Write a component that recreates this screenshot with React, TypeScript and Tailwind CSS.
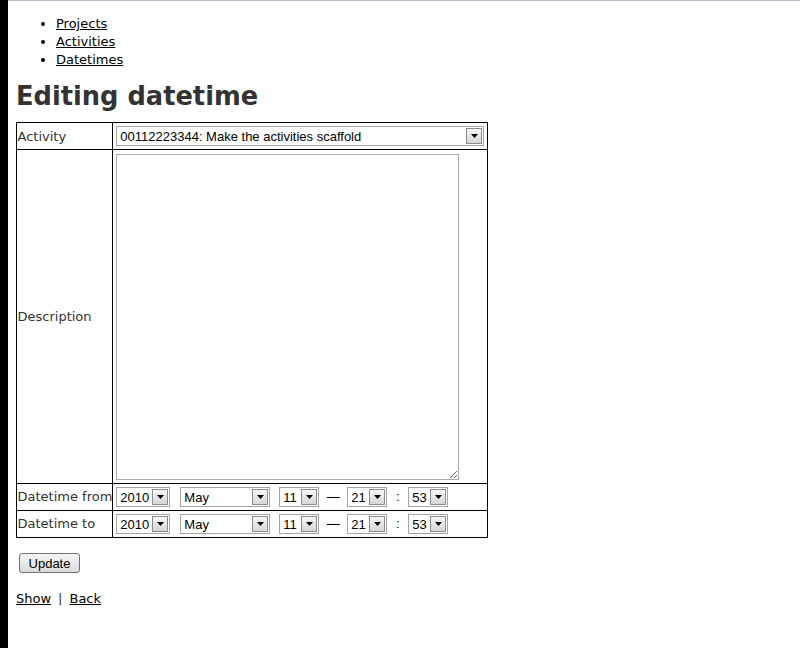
import React from "react";

function Arrow() {
  return (
    <div className="flex h-4 w-4 shrink-0 items-center justify-center border border-[#8c8c8c] bg-gradient-to-b from-[#f7f7f7] to-[#d6d6d6]">
      <svg width="7" height="4" viewBox="0 0 7 4">
        <path d="M0 0h7L3.5 4z" fill="#000" />
      </svg>
    </div>
  );
}

function Sel({ value, className }: { value: string; className: string }) {
  return (
    <div
      className={`flex h-5 shrink-0 items-center justify-between border border-[#a5a5a5] bg-white pl-[3px] pr-px font-['Liberation_Sans',Arial,sans-serif] text-[13px] leading-none text-black ${className}`}
    >
      <span className="whitespace-nowrap">{value}</span>
      <Arrow />
    </div>
  );
}

function DateTimeRow() {
  return (
    <div className="flex items-center font-['Liberation_Sans',Arial,sans-serif] text-[13px] text-black">
      <Sel value="2010" className="mr-[10px] w-[54px]" />
      <Sel value="May" className="mr-[9px] w-[90px]" />
      <Sel value="11" className="w-[40px]" />
      <span className="w-[28px] text-center">—</span>
      <Sel value="21" className="w-[40px]" />
      <span className="w-[21px] text-center">:</span>
      <Sel value="53" className="w-[40px]" />
    </div>
  );
}

export default function App() {
  const label = "border border-black pl-[0.5px] align-middle whitespace-nowrap";
  const cell = "border border-black pl-[3px] align-middle";

  return (
    <div className="flex min-h-[648px] bg-white font-['DejaVu_Sans',Verdana,sans-serif] text-[13px] text-[#333]">
      <div className="w-2 shrink-0 bg-black" />
      <div className="flex-1 border-t border-[#b8bccc] pl-2">
        <ul className="mt-[14px] list-disc pl-10 leading-[18px] text-black">
          <li>
            <a href="#" className="underline">Projects</a>
          </li>
          <li>
            <a href="#" className="underline">Activities</a>
          </li>
          <li>
            <a href="#" className="underline">Datetimes</a>
          </li>
        </ul>

        <h1 className="mt-[12px] mb-[11px] text-[25.7px] leading-[30px] font-bold text-[#333]">
          Editing datetime
        </h1>

        <table className="table-fixed border-collapse border border-black">
          <tbody>
            <tr>
              <td className={`${label} h-[27px] w-[94px] pt-px`}>Activity</td>
              <td className={`${cell} h-[27px] w-[375px]`}>
                <Sel value="00112223344: Make the activities scaffold" className="w-[368px]" />
              </td>
            </tr>
            <tr>
              <td className={`${label} h-[334px]`}>Description</td>
              <td className={`${cell} h-[334px]`}>
                <textarea
                  readOnly
                  className="block h-[326px] w-[343px] border border-[#a9a9a9] bg-white"
                />
              </td>
            </tr>
            <tr>
              <td className={`${label} h-[27px]`}>Datetime from</td>
              <td className={`${cell} h-[27px]`}>
                <DateTimeRow />
              </td>
            </tr>
            <tr>
              <td className={`${label} h-[27px]`}>Datetime to</td>
              <td className={`${cell} h-[27px]`}>
                <DateTimeRow />
              </td>
            </tr>
          </tbody>
        </table>

        <div className="mt-[15px] pl-[3px]">
          <button
            type="button"
            className="h-5 w-[61px] rounded-[3px] border border-[#707070] bg-gradient-to-b from-[#f5f5f5] to-[#dcdcdc] font-['Liberation_Sans',Arial,sans-serif] text-[13px] leading-none text-black"
          >
            Update
          </button>
        </div>

        <p className="mt-[17px] leading-[18px] text-[#333]">
          <a href="#" className="text-black underline">Show</a>
          <span className="mx-[7px]">|</span>
          <a href="#" className="text-black underline">Back</a>
        </p>
      </div>
    </div>
  );
}
